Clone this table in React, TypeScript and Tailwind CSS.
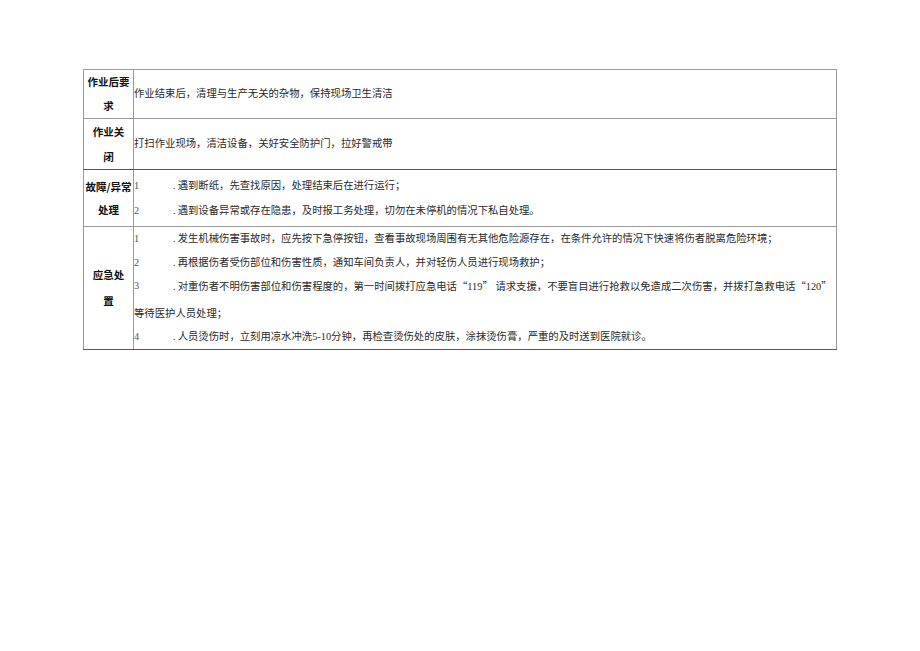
import React from "react";

const sans = "font-['Noto_Sans_CJK_SC','Noto_Sans',sans-serif]";
const serif = "font-['Liberation_Serif','Noto_Sans_CJK_SC',serif]";
const cjk = "font-['Noto_Sans_CJK_SC',sans-serif]";

function Item({ n, children }: { n: string; children: React.ReactNode }) {
  return (
    <div className="flex">
      <span className="inline-block w-[39px] shrink-0 text-[#555]">{n}</span>
      <span>.&thinsp;{children}</span>
    </div>
  );
}

function Q({ children }: { children: React.ReactNode }) {
  return (
    <>
      <span className={cjk}>“</span>
      {children}
      <span className={cjk}>”</span>
    </>
  );
}

export default function App() {
  const head = `border border-[#9a9a9a] w-[50px] p-0 text-center align-middle text-[10.5px] font-bold text-[#111] whitespace-nowrap ${sans}`;
  const body = `border border-[#9a9a9a] p-0 align-middle text-left text-[10.35px] text-[#2a2a2a] whitespace-nowrap ${serif}`;

  return (
    <div className="min-h-[651px] w-[920px] bg-white pl-[83px] pt-[69px]">
      <table className="w-[754px] border-collapse table-fixed">
        <colgroup>
          <col className="w-[50px]" />
          <col />
        </colgroup>
        <tbody>
          <tr className="h-[48px]">
            <td className={`${head} leading-[24px]`}>
              作业后要
              <br />求
            </td>
            <td className={`${body} leading-[24px]`}>
              作业结束后，清理与生产无关的杂物，保持现场卫生清洁
            </td>
          </tr>
          <tr className="h-[49px]">
            <td className={`${head} leading-[25px] border-b-[#555]`}>
              作业关
              <br />闭
            </td>
            <td className={`${body} leading-[24px] border-b-[#555]`}>
              打扫作业现场，清洁设备，关好安全防护门，拉好警戒带
            </td>
          </tr>
          <tr className="h-[57px]">
            <td className={`${head} leading-[23px]`}>
              故障/异常
              <br />处理
            </td>
            <td className={`${body} leading-[25px]`}>
              <Item n="1">遇到断纸，先查找原因，处理结束后在进行运行；</Item>
              <Item n="2">遇到设备异常或存在隐患，及时报工务处理，切勿在未停机的情况下私自处理。</Item>
            </td>
          </tr>
          <tr className="h-[121px]">
            <td className={`${head} leading-[26px] border-b-[#555]`}>
              应急处
              <br />置
            </td>
            <td className={`${body} leading-[23.5px] border-b-[#555]`}>
              <Item n="1">
                发生机械伤害事故时，应先按下急停按钮，查看事故现场周围有无其他危险源存在，在条件允许的情况下快速将伤者脱离危险环境；
              </Item>
              <Item n="2">再根据伤者受伤部位和伤害性质，通知车间负责人，并对轻伤人员进行现场救护；</Item>
              <Item n="3">
                对重伤者不明伤害部位和伤害程度的，第一时间拨打应急电话<Q>119</Q> 请求支援，不要盲目进行抢救以免造成二次伤害，并拨打急救电话<Q>120</Q>
              </Item>
              <div className="mt-[3px]">等待医护人员处理；</div>
              <Item n="4">人员烫伤时，立刻用凉水冲洗5-10分钟，再检查烫伤处的皮肤，涂抹烫伤膏，严重的及时送到医院就诊。</Item>
            </td>
          </tr>
        </tbody>
      </table>
    </div>
  );
}
